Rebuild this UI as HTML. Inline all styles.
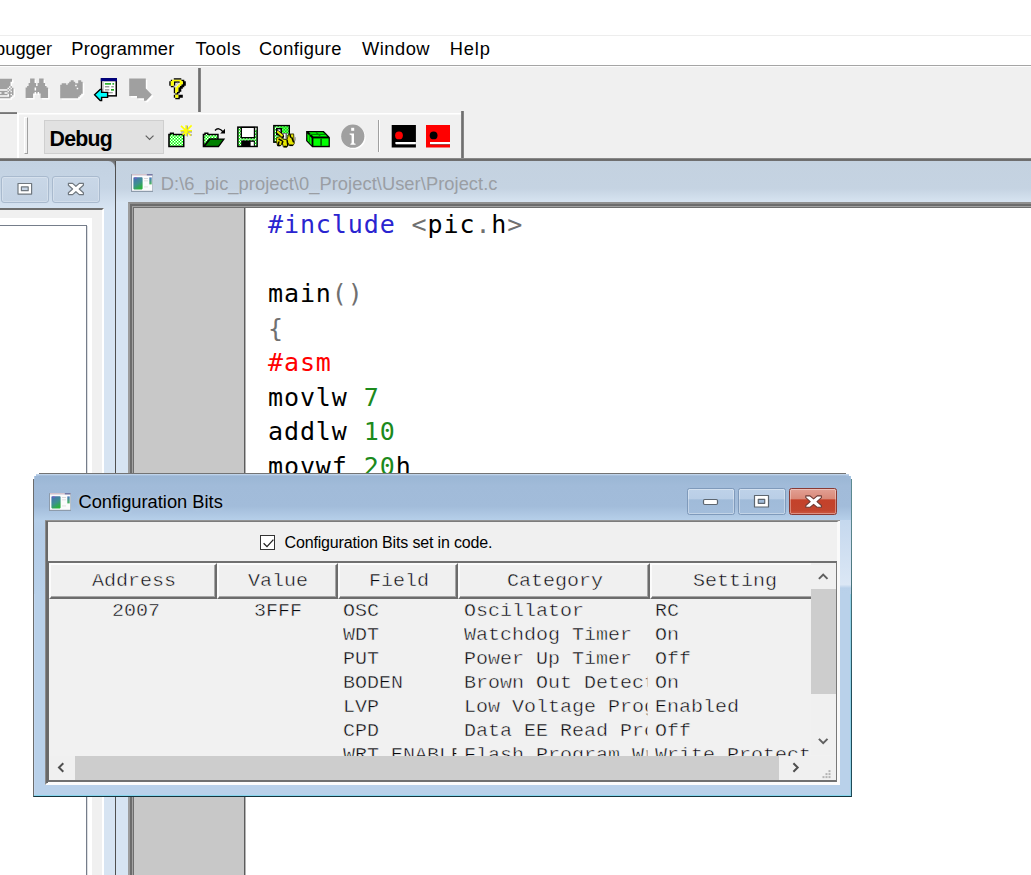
<!DOCTYPE html>
<html lang="en">
<head>
<meta charset="utf-8">
<title>MPLAB IDE - Configuration Bits</title>
<style>
html,body{margin:0;padding:0;}
body{width:1031px;height:875px;overflow:hidden;background:#fff;position:relative;font-family:"Liberation Sans",sans-serif;color:#000;}
.abs,#app div,#app svg{position:absolute;box-sizing:border-box;}
#app{position:absolute;left:0;top:0;width:1031px;height:875px;overflow:hidden;}
.t{white-space:pre;line-height:1;}
/* menu */
#menuline0{left:0;top:35px;width:1031px;height:1px;background:#ededed;}
.mi{top:38px;font-size:18.3px;line-height:21px;height:21px;white-space:pre;}
#menuline1{left:0;top:65px;width:1031px;height:1px;background:#a5a5a5;}
#tbarea{left:0;top:66px;width:1031px;height:92px;background:#f0f0f0;border-top:1px solid #fdfdfd;}
#sep1{left:198px;top:68px;width:3px;height:44px;background:linear-gradient(90deg,#8a8a8a,#6a6a6a 60%,#9a9a9a);}
#tb1bottom{left:0;top:112px;width:17px;height:2px;background:linear-gradient(#8c8c8c,#6e6e6e);}
#tb2{left:17px;top:113px;width:445px;height:45px;border-left:2px solid #fff;background:linear-gradient(#fff 0,#fff 1px,#f8f8f8 1px,#f8f8f8 2px,rgba(240,240,240,0) 2px);}
#tb2right{left:461px;top:111px;width:3px;height:47px;background:linear-gradient(90deg,#8a8a8a,#6a6a6a 60%,#9a9a9a);}
#grip{left:24px;top:117px;width:4px;height:37px;background:#f0f0f0;border-left:1px solid #fff;border-top:1px solid #fff;border-right:1px solid #a0a0a0;border-bottom:1px solid #a0a0a0;}
#combo{left:44px;top:120px;width:120px;height:34px;background:#e1e1e1;border:1px solid #cfcfcf;}
#combotext{left:49.5px;top:127px;font-weight:bold;font-size:21.3px;line-height:24px;height:24px;letter-spacing:-0.75px;}
#sep2{left:378px;top:120px;width:2px;height:32px;border-left:1px solid #a0a0a0;border-right:1px solid #fff;}
#darkline{left:0;top:158px;width:1031px;height:3px;background:linear-gradient(#9a9a9a,#6b6b6b 45%,#707070);}
/* left pane */
#lp{left:0;top:161px;width:115px;height:714px;background:#d7e4f2;}
#lpcorner{left:107px;top:0;width:8px;height:8px;background:linear-gradient(225deg,#6a6a6a 0,#8a8f96 35%,#c3d2e2 60%);}
#lptitle{left:0;top:0;width:115px;height:48px;background:linear-gradient(#c3d2e2 0%,#c6d5e5 55%,#d7e4f2 100%);border-top-right-radius:7px;}
.lpbtn{top:15px;width:48px;height:27px;border:1px solid #a9bace;border-radius:3px;background:linear-gradient(#c9d7e7,#c3d2e3);box-shadow:inset 0 0 0 1px rgba(255,255,255,.25);}
#lpclient{left:0;top:47px;width:104px;height:670px;background:#f0f0f0;border-top:2px solid #6f6f6f;border-right:2px solid #fff;}
#lpwhite{left:0;top:8px;width:92px;height:660px;background:#fff;}
#lptree{left:-2px;top:7px;width:89px;height:660px;border:1px solid #757d8a;background:#fff;box-shadow:1px 1px 0 rgba(120,128,140,.25);}
#vline{left:115px;top:161px;width:1px;height:714px;background:#505050;box-shadow:1px 0 0 rgba(90,90,90,.3);}
/* editor */
#ed{left:116px;top:161px;width:915px;height:714px;background:#d7e4f2;}
#edtitle{left:0;top:0;width:915px;height:42px;background:linear-gradient(#c4d2e0 0%,#c5d3e2 65%,#d8e5f2 100%);}
#edtitletext{left:44.8px;top:12px;font-size:18.3px;line-height:21px;color:#9a9ea4;white-space:pre;letter-spacing:0.06px;}
#edframe{left:12px;top:41px;width:910px;height:680px;border:2px solid;border-color:#8f8f8f #8f8f8f #8f8f8f #9c9c9c;background:#6c6c6c;}
#edframe2{left:2px;top:2px;width:910px;height:680px;border-left:1px solid #a2a2a2;border-top:1px solid #a2a2a2;background:#6e6e6e;}
#edframe3{left:1px;top:1px;width:910px;height:680px;background:#fff;}
#gutter{left:0;top:0;width:111px;height:680px;background:#c8c8c8;border-right:1px solid #5c5c5c;box-shadow:1px 0 0 #b4b4b4;}
#code{left:134px;top:-0.1px;font-family:"DejaVu Sans Mono","Liberation Mono",monospace;font-size:25px;letter-spacing:0.9px;line-height:34.6px;white-space:pre;color:#000;}
.kb{color:#2a24d0}.kr{color:#f00}.kg{color:#1c8a1c}.kp{color:#707070}
/* dialog */
#dlg{left:33px;top:473px;width:819px;height:324px;background:#b9d1ea;border:1px solid;border-color:#747474 #1f4a57 #16343d #6c6c6c;border-radius:0;box-shadow:inset 0 -1px 0 #86d6ee, inset -1px 0 0 #8fcfe6, inset 1px 0 0 #c3d7ee;overflow:hidden;}
#dlgtitlebg{left:0;top:0;width:817px;height:120px;background:linear-gradient(#cadcf0 0,#9bb6d5 2px,#a1bbd9 12px,#a2bcda 32px,#b6cfe9 46px,#b4cce7 60px,#b9d1ea 120px);}
#dlgrhl{left:806px;top:46px;width:11px;height:68px;background:linear-gradient(#c5d8ee,#dbe7f5 95%,#b9d1ea);}
#dlgtitle{left:44.5px;top:17px;font-size:18.3px;line-height:21px;white-space:pre;color:#000;text-shadow:0 0 5px rgba(255,255,255,.35);}
.cb{top:14px;height:27px;width:48px;border:1px solid #7f9abb;border-radius:2.5px;background:linear-gradient(#bed2e9 0,#b9cee6 40%,#a0bbd9 43%,#a3bddb 100%);box-shadow:inset 0 0 0 1px rgba(255,255,255,.35);}
#cbmin{left:653px}#cbmax{left:704px}#cbclose{left:755px;width:48px;border-color:#8a3a34;background:linear-gradient(#e2a094 0,#d98877 40%,#c4412a 43%,#c2452e 85%,#cc5a45 100%);}
.cbt{display:none}
#client{left:11px;top:46px;width:795px;height:265px;background:#f0f0f0;border-style:solid;border-width:2px 3px 3px 3px;border-color:#7c7c7c #fafafa #fcfcfc #8a8a8a;}
#client:before{content:"";position:absolute;left:-3px;top:-2px;width:795px;height:1px;background:#939393;}
#client:after{content:"";position:absolute;left:-2px;top:-1px;width:2px;height:262px;background:#686868;}
#cin{left:0;top:0;width:789px;height:260px;}
#chk{left:211.6px;top:12.6px;width:15px;height:15px;background:#fff;border:1px solid #333;}
#chklabel{left:236.5px;top:10.5px;font-size:16px;line-height:20px;letter-spacing:-0.15px;white-space:pre;color:#000;}
#tbl{left:0px;top:39px;width:789px;height:221px;border-style:solid;border-width:2px 1px 2px 1px;border-color:#707070 #787878 #707070 #6a6a6a;overflow:hidden;background:#f1f1f1;}
#tbl:before{content:"";position:absolute;left:0;top:-2px;width:789px;height:1px;background:#a6a6a6;}
.hc{top:0;height:36px;background:#f0f0f0;border-style:solid;border-width:2px 2px 2px 2px;border-color:#fbfbfb #6c6c6c #6c6c6c #fbfbfb;box-shadow:inset -1px -1px 0 #a6a6a6;}
.ht,.col{font-family:"Liberation Mono",monospace;font-size:18px;line-height:24px;white-space:pre;color:#08080c;-webkit-text-stroke:0.42px #f0f0f0;transform:scaleX(1.1111);transform-origin:0 0;}
.ht{top:5.5px;}
#rows{left:0;top:36px;width:762px;height:156.6px;overflow:hidden;}
.col{top:0px;overflow:hidden;height:170px;}
#vsb{left:762px;top:0;width:25px;height:192px;background:#f0f0f0;}
#vthumb{left:0;top:26px;width:25px;height:105px;background:#cdcdcd;}
#hsb{left:0;top:193px;width:762px;height:24px;background:#f0f0f0;}
#hthumb{left:26px;top:0;width:704px;height:24px;background:#cdcdcd;}
#sgrip{left:762px;top:193px;width:26px;height:24px;background:#f0f0f0;}
</style>
</head>
<body>
<div id="app">
<div id="menuline0"></div>
<div class="mi" style="left:-28.3px">Debugger</div>
<div class="mi" style="left:71.3px;letter-spacing:0.15px">Programmer</div>
<div class="mi" style="left:195.5px;letter-spacing:0.6px">Tools</div>
<div class="mi" style="left:259px;letter-spacing:0.4px">Configure</div>
<div class="mi" style="left:362px;letter-spacing:0.5px">Window</div>
<div class="mi" style="left:449.8px;letter-spacing:0.8px">Help</div>
<div id="menuline1"></div>
<div id="tbarea"></div>
<div id="sep1"></div>
<div id="tb1bottom"></div>
<div id="tb2"></div>
<div id="tb2right"></div>
<div id="grip"></div>
<div id="combo"></div>
<div id="combotext" class="t">Debug</div>
<div id="sep2"></div>
<!--ICONS-START--><svg id="tbicons" width="1031" height="161" viewBox="0 0 1031 161" style="left:0;top:0"><defs><pattern id="dg" width="3" height="3" patternUnits="userSpaceOnUse"><rect width="3" height="3" fill="#00ff00"/><rect x="0" y="0" width="1.5" height="1.5" fill="#fff"/><rect x="1.5" y="1.5" width="1.5" height="1.5" fill="#fff"/></pattern></defs><path d="M0.00 80.20h13.50v1.50h-13.50zM0.00 81.70h13.50v1.50h-13.50zM0.00 83.20h12.00v1.50h-12.00zM0.00 84.70h12.00v1.50h-12.00zM0.00 86.20h12.00v1.50h-12.00zM0.00 87.70h10.50v1.50h-10.50zM12.00 87.70h1.50v1.50h-1.50zM0.00 89.20h9.00v1.50h-9.00zM10.50 89.20h1.50v1.50h-1.50zM13.50 89.20h1.50v1.50h-1.50zM9.00 90.70h1.50v1.50h-1.50zM12.00 90.70h3.00v1.50h-3.00zM0.00 92.20h9.00v1.50h-9.00zM10.50 92.20h1.50v1.50h-1.50zM13.50 92.20h1.50v1.50h-1.50zM0.00 93.70h1.50v1.50h-1.50zM3.00 93.70h3.00v1.50h-3.00zM9.00 93.70h6.00v1.50h-6.00zM0.00 95.20h9.00v1.50h-9.00zM10.50 95.20h1.50v1.50h-1.50zM13.50 95.20h1.50v1.50h-1.50zM10.50 96.70h3.00v1.50h-3.00zM0.00 98.20h12.00v1.50h-12.00z" fill="#ffffff"/><path d="M-1.50 78.70h13.50v1.50h-13.50zM-1.50 80.20h13.50v1.50h-13.50zM-1.50 81.70h12.00v1.50h-12.00zM-1.50 83.20h12.00v1.50h-12.00zM-1.50 84.70h12.00v1.50h-12.00zM-1.50 86.20h10.50v1.50h-10.50zM10.50 86.20h1.50v1.50h-1.50zM-1.50 87.70h9.00v1.50h-9.00zM9.00 87.70h1.50v1.50h-1.50zM12.00 87.70h1.50v1.50h-1.50zM7.50 89.20h1.50v1.50h-1.50zM10.50 89.20h3.00v1.50h-3.00zM-1.50 90.70h9.00v1.50h-9.00zM9.00 90.70h1.50v1.50h-1.50zM12.00 90.70h1.50v1.50h-1.50zM-1.50 92.20h1.50v1.50h-1.50zM1.50 92.20h3.00v1.50h-3.00zM7.50 92.20h6.00v1.50h-6.00zM-1.50 93.70h9.00v1.50h-9.00zM9.00 93.70h1.50v1.50h-1.50zM12.00 93.70h1.50v1.50h-1.50zM9.00 95.20h3.00v1.50h-3.00zM-1.50 96.70h12.00v1.50h-12.00z" fill="#a0a0a0"/><path d="M31.60 79.90h4.50v1.50h-4.50zM40.60 79.90h4.50v1.50h-4.50zM31.60 81.40h4.50v1.50h-4.50zM40.60 81.40h4.50v1.50h-4.50zM31.60 82.90h4.50v1.50h-4.50zM40.60 82.90h4.50v1.50h-4.50zM30.10 84.40h7.50v1.50h-7.50zM39.10 84.40h7.50v1.50h-7.50zM30.10 85.90h7.50v1.50h-7.50zM39.10 85.90h7.50v1.50h-7.50zM28.60 87.40h19.50v1.50h-19.50zM27.10 88.90h9.00v1.50h-9.00zM37.60 88.90h12.00v1.50h-12.00zM27.10 90.40h9.00v1.50h-9.00zM37.60 90.40h12.00v1.50h-12.00zM27.10 91.90h22.50v1.50h-22.50zM27.10 93.40h9.00v1.50h-9.00zM37.60 93.40h1.50v1.50h-1.50zM40.60 93.40h9.00v1.50h-9.00zM27.10 94.90h7.50v1.50h-7.50zM42.10 94.90h7.50v1.50h-7.50zM27.10 96.40h7.50v1.50h-7.50zM42.10 96.40h7.50v1.50h-7.50zM27.10 97.90h7.50v1.50h-7.50zM42.10 97.90h7.50v1.50h-7.50z" fill="#ffffff"/><path d="M30.10 78.40h4.50v1.50h-4.50zM39.10 78.40h4.50v1.50h-4.50zM30.10 79.90h4.50v1.50h-4.50zM39.10 79.90h4.50v1.50h-4.50zM30.10 81.40h4.50v1.50h-4.50zM39.10 81.40h4.50v1.50h-4.50zM28.60 82.90h7.50v1.50h-7.50zM37.60 82.90h7.50v1.50h-7.50zM28.60 84.40h7.50v1.50h-7.50zM37.60 84.40h7.50v1.50h-7.50zM27.10 85.90h19.50v1.50h-19.50zM25.60 87.40h9.00v1.50h-9.00zM36.10 87.40h12.00v1.50h-12.00zM25.60 88.90h9.00v1.50h-9.00zM36.10 88.90h12.00v1.50h-12.00zM25.60 90.40h22.50v1.50h-22.50zM25.60 91.90h9.00v1.50h-9.00zM36.10 91.90h1.50v1.50h-1.50zM39.10 91.90h9.00v1.50h-9.00zM25.60 93.40h7.50v1.50h-7.50zM40.60 93.40h7.50v1.50h-7.50zM25.60 94.90h7.50v1.50h-7.50zM40.60 94.90h7.50v1.50h-7.50zM25.60 96.40h7.50v1.50h-7.50zM40.60 96.40h7.50v1.50h-7.50z" fill="#a0a0a0"/><path d="M72.20 81.70h3.00v1.50h-3.00zM79.70 81.70h3.00v1.50h-3.00zM70.70 83.20h6.00v1.50h-6.00zM79.70 83.20h4.50v1.50h-4.50zM63.20 84.70h4.50v1.50h-4.50zM69.20 84.70h15.00v1.50h-15.00zM61.70 86.20h15.00v1.50h-15.00zM78.20 86.20h6.00v1.50h-6.00zM61.70 87.70h22.50v1.50h-22.50zM61.70 89.20h16.50v1.50h-16.50zM79.70 89.20h4.50v1.50h-4.50zM61.70 90.70h22.50v1.50h-22.50zM61.70 92.20h22.50v1.50h-22.50zM61.70 93.70h22.50v1.50h-22.50zM61.70 95.20h21.00v1.50h-21.00zM61.70 96.70h19.50v1.50h-19.50zM61.70 98.20h18.00v1.50h-18.00z" fill="#ffffff"/><path d="M70.70 80.20h3.00v1.50h-3.00zM78.20 80.20h3.00v1.50h-3.00zM69.20 81.70h6.00v1.50h-6.00zM78.20 81.70h4.50v1.50h-4.50zM61.70 83.20h4.50v1.50h-4.50zM67.70 83.20h15.00v1.50h-15.00zM60.20 84.70h15.00v1.50h-15.00zM76.70 84.70h6.00v1.50h-6.00zM60.20 86.20h22.50v1.50h-22.50zM60.20 87.70h16.50v1.50h-16.50zM78.20 87.70h4.50v1.50h-4.50zM60.20 89.20h22.50v1.50h-22.50zM60.20 90.70h22.50v1.50h-22.50zM60.20 92.20h22.50v1.50h-22.50zM60.20 93.70h21.00v1.50h-21.00zM60.20 95.20h19.50v1.50h-19.50zM60.20 96.70h18.00v1.50h-18.00z" fill="#a0a0a0"/><rect x="100.8" y="78.1" width="16.2" height="18.5" fill="#000"/><rect x="100.8" y="78.1" width="16.2" height="3.2" fill="#000080"/><rect x="102.3" y="81.3" width="13.2" height="13.8" fill="#fff"/><rect x="102.3" y="81.3" width="1.6" height="13.8" fill="#c8c8c8"/><rect x="104.9" y="83.2" width="6.1" height="1.4" fill="#00a000"/><rect x="112.4" y="83.2" width="1.7" height="1.4" fill="#00a000"/><rect x="104.9" y="86.1" width="4.4" height="1.3" fill="#909090"/><rect x="111.3" y="86.1" width="2.5" height="1.3" fill="#909090"/><rect x="104.9" y="89.2" width="4.4" height="1.3" fill="#909090"/><rect x="111" y="89.1" width="3" height="1.5" fill="#00a000"/><rect x="108" y="92" width="4.8" height="1.3" fill="#a0a0a0"/><path d="M94.6 94.8 L100.2 89.4 L101.6 89.4 L101.6 92.4 L107.6 92.4 L107.6 97.4 L101.6 97.4 L101.6 100.6 L100.2 100.6 Z" fill="#00ffff" stroke="#000" stroke-width="1.4" stroke-linejoin="miter"/><path d="M130.7 80.0 H147.3 V90.1 L153.4 96.2 L147.7 102.3 H145.5 V99.7 H138.5 V97.5 H130.7 z" fill="#fff"/><path d="M129.2 78.5 H145.8 V88.6 L151.9 94.7 L146.2 100.8 H144.0 V98.2 H137.0 V96.0 H129.2 z" fill="#a0a0a0"/><path d="M173.80 78.20h7.50v1.50h-7.50zM170.80 79.70h1.50v1.50h-1.50zM181.30 79.70h3.00v1.50h-3.00zM169.30 81.20h1.50v1.50h-1.50zM173.80 81.20h6.00v1.50h-6.00zM182.80 81.20h3.00v1.50h-3.00zM169.30 82.70h1.50v1.50h-1.50zM173.80 82.70h1.50v1.50h-1.50zM182.80 82.70h3.00v1.50h-3.00zM169.30 84.20h1.50v1.50h-1.50zM173.80 84.20h1.50v1.50h-1.50zM181.30 84.20h4.50v1.50h-4.50zM170.80 85.70h3.00v1.50h-3.00zM179.80 85.70h4.50v1.50h-4.50zM173.80 87.20h1.50v1.50h-1.50zM178.30 87.20h4.50v1.50h-4.50zM173.80 88.70h1.50v1.50h-1.50zM178.30 88.70h3.00v1.50h-3.00zM173.80 90.20h1.50v1.50h-1.50zM178.30 90.20h3.00v1.50h-3.00zM173.80 91.70h1.50v1.50h-1.50zM176.80 91.70h3.00v1.50h-3.00zM175.30 93.20h3.00v1.50h-3.00zM173.80 94.70h1.50v1.50h-1.50zM178.30 94.70h4.50v1.50h-4.50zM173.80 96.20h1.50v1.50h-1.50zM178.30 96.20h4.50v1.50h-4.50zM175.30 97.70h4.50v1.50h-4.50z" fill="#000000"/><path d="M172.30 79.70h9.00v1.50h-9.00zM170.80 81.20h3.00v1.50h-3.00zM179.80 81.20h3.00v1.50h-3.00zM170.80 82.70h3.00v1.50h-3.00zM179.80 82.70h3.00v1.50h-3.00zM170.80 84.20h3.00v1.50h-3.00zM178.30 84.20h3.00v1.50h-3.00zM176.80 85.70h3.00v1.50h-3.00zM175.30 87.20h3.00v1.50h-3.00zM175.30 88.70h3.00v1.50h-3.00zM175.30 90.20h3.00v1.50h-3.00zM175.30 91.70h1.50v1.50h-1.50zM175.30 94.70h3.00v1.50h-3.00zM175.30 96.20h3.00v1.50h-3.00z" fill="#ffff00"/><path d="M176.80 82.70h1.50v1.50h-1.50zM175.30 84.20h1.50v1.50h-1.50zM173.80 85.70h1.50v1.50h-1.50z" fill="#c0c0c0"/><path d="M168.2 147.2 V133.8 h1.6 v-1.3 h4.2 v1.3 h10.5 V147.2 z" fill="#000"/><path d="M169.8 145.7 V135.3 h1.5 v-1.3 h1.5 v1.3 h10.2 V145.7 z" fill="url(#dg)"/><g stroke="#ffff00" stroke-width="1.6"><path d="M186.1 125.2 V136 M180.4 130.9 H192 M181 125.9 L191 135.6 M191.6 125.4 L182.6 134.6"/></g><g stroke="#909090" stroke-width="1"><path d="M187.3 125.6 V136.6 M181 132 H192"/></g><rect x="184.2" y="128.8" width="3.6" height="4.4" fill="#ffff00"/><rect x="190.6" y="134.4" width="1.2" height="1.2" fill="#808080"/><path d="M202.7 147.2 V133.8 h1.6 v-1.3 h4.2 v1.3 h10.2 v4.6 h6.5 L218.8 147.2 z" fill="#000"/><path d="M204.3 144.6 V135.3 h1.4 v-1.3 h1.6 v1.3 h9.9 v3 h-8 z" fill="url(#dg)"/><path d="M205.6 145.8 L210.4 139.8 H222.8 L218.2 145.8 z" fill="#008000"/><path d="M215 130.4 q3.6 -3.8 8 1.4" fill="none" stroke="#000" stroke-width="1.4"/><path d="M225 128.8 v4.8 h-4.8 z" fill="#000"/><rect x="237.1" y="126.4" width="20.8" height="20.8" fill="#000"/><rect x="238.6" y="127.9" width="17.8" height="17.8" fill="url(#dg)"/><rect x="240.6" y="126.8" width="14.6" height="11.6" fill="#000"/><rect x="242" y="128" width="11.8" height="9" fill="#fff"/><rect x="255" y="127.8" width="1.6" height="2" fill="#c0c0c0"/><rect x="241.2" y="140.4" width="13.6" height="6.2" fill="#000"/><rect x="250.6" y="141.8" width="3.2" height="4" fill="#fff"/><rect x="273.1" y="124.9" width="16.9" height="18" fill="#000"/><rect x="274.6" y="126.4" width="13.9" height="15" fill="url(#dg)"/><rect x="279.5" y="126.4" width="8.8" height="7" fill="#00e000" opacity=".55"/><rect x="276" y="128" width="6" height="7.4" fill="#000"/><rect x="277.6" y="129.4" width="2.8" height="3" fill="#fff"/><rect x="282" y="133" width="5.2" height="6.4" fill="#707070"/><rect x="283.8" y="133.8" width="1.7" height="5" fill="#fff"/><path d="M277.9 132.1 L282.3 136.2" stroke="#000" stroke-width="3.6" stroke-linecap="round"/><path d="M277.9 131.9 L281.9 135.6" stroke="#f0f000" stroke-width="2" stroke-linecap="round"/><path d="M276.8 137.6 L280.1 136.5 L282.6 139 L287 139.8 L288.5 134.3 L293.6 133.9 L294.3 143.4 L292.9 145.6 L289.6 145.6 L288.5 143.4 L287 147.1 L283.4 147.1 L282.6 143.8 L280.4 145.6 L277.5 145.6 L276.4 140.5 z" fill="#e6e600" stroke="#3a3a00" stroke-width="1" stroke-linejoin="round"/><g stroke="#000" stroke-width="1.5" fill="none" stroke-linecap="round"><path d="M279 139.2 L281.9 140.6"/><path d="M278.9 142 L278 145.4"/><path d="M282.8 141.6 L282 143.8"/><path d="M287.2 140.6 L287.8 145.4"/><path d="M291.9 137.8 L293.4 141.8"/><path d="M290 134.6 L290.6 137"/><path d="M284.5 146.6 H286.4"/><path d="M290 145.3 H292.4"/><path d="M278.4 145.4 H280"/></g><rect x="294.4" y="137.2" width="1.5" height="3.4" fill="#a8a8a8"/><path d="M306.1 130.9 H323.8 L329.9 137.3 V147.2 H312.2 L306.1 141 z" fill="#000"/><path d="M308.8 132.2 H323 L327.4 136.6 H313.4 z" fill="#00ff00"/><path d="M307.4 133.4 L311.6 138 V145.2 L307.4 140.6 z" fill="#00ff00"/><rect x="313.4" y="138.4" width="15.2" height="7.4" fill="#00ff00"/><path d="M316 132.2 L320.8 136.6 M309.6 134.4 H325" stroke="#008000" stroke-width="1.2" fill="none"/><rect x="320.2" y="138.4" width="1.8" height="7.4" fill="#007000"/><path d="M309.4 135.4 V142.6" stroke="#00a000" stroke-width="1"/><circle cx="354" cy="137.5" r="11.6" fill="#fff"/><circle cx="352.8" cy="136.2" r="11.6" fill="#a0a0a0"/><rect x="351.2" y="127.8" width="3" height="3" fill="#fff"/><path d="M349.6 133.4 h4.4 v9 q0 1.2 1.6 1.4 v1 h-5.2 v-1 q1.2 -0.2 1.2 -1.4 v-6.6 q0 -1.2 -2 -1.4 z" fill="#fff"/><rect x="391.7" y="125" width="24.2" height="22.5" fill="#000"/><circle cx="399" cy="135.4" r="3.9" fill="#ff0000"/><rect x="395.4" y="142" width="20.5" height="2.1" fill="#fff"/><rect x="396" y="144.1" width="19.9" height="0.8" fill="#606060"/><rect x="426" y="125" width="24" height="22.5" fill="#ff0000"/><circle cx="433.6" cy="135.4" r="3.9" fill="#000"/><rect x="430" y="142" width="20" height="2.1" fill="#fff"/><rect x="430.6" y="144.1" width="19.4" height="0.8" fill="#905050"/><path d="M145.7 135.6 L149.6 139.4 L153.5 135.6" fill="none" stroke="#606060" stroke-width="1.2"/></svg><!--ICONS-END-->
<div id="darkline"></div>

<div id="lp">
  <div id="lpcorner"></div><div id="lptitle"></div>
  <div class="lpbtn" style="left:1px"><svg width="48" height="27" viewBox="0 0 48 27" style="left:-1px;top:-1px"><path d="M17 7.5h13.6v10.6h-13.6z M20.4 10.9v3.8h6.8v-3.8z" fill="#fff" fill-rule="evenodd" stroke="#70787f" stroke-width="1.2" stroke-linejoin="round"/></svg></div>
  <div class="lpbtn" style="left:52px"><svg width="48" height="27" viewBox="0 0 48 27" style="left:-1px;top:-1px"><path d="M16.4 7.4 L20.6 7.4 L23.9 10.3 L27.2 7.4 L31.4 7.4 L31.4 9.2 L27.2 13 L31.4 16.8 L31.4 18.6 L27.2 18.6 L23.9 15.7 L20.6 18.6 L16.4 18.6 L16.4 16.8 L20.6 13 L16.4 9.2 Z" fill="#fff" stroke="#70787f" stroke-width="1.2" stroke-linejoin="round"/></svg></div>
  <div id="lpclient"><div id="lpwhite"><div id="lptree"></div></div></div>
</div>
<div id="vline"></div>

<div id="ed">
  <div id="edtitle"></div>
  <svg class="wicon" width="24" height="20" viewBox="0 0 24 20" style="left:14.1px;top:12.2px"><defs><linearGradient id="wg1" x1="0" y1="0" x2="0.5" y2="1"><stop offset="0" stop-color="#4a6cb8"/><stop offset="0.6" stop-color="#3e9090"/><stop offset="1" stop-color="#2cb040"/></linearGradient><linearGradient id="wh1" x1="0" y1="0" x2="0" y2="1"><stop offset="0" stop-color="#4a78c0"/><stop offset="1" stop-color="#4cb85c"/></linearGradient></defs><rect x="1" y="1" width="22" height="18" rx="0.6" fill="#8d9bab"/><rect x="2" y="2.2" width="20.4" height="15.6" fill="#fbfbfc"/><rect x="2" y="1.1" width="20.4" height="1.2" fill="#dcc8d0"/><rect x="16.8" y="1.1" width="5.6" height="1.3" fill="#6a70a0"/><rect x="3.4" y="4.2" width="9.2" height="12.2" rx="0.8" fill="url(#wg1)"/><rect x="5" y="4.2" width="1.6" height="1.4" fill="#9a50d0" opacity=".7"/><rect x="14" y="5" width="4" height="0.9" fill="#d4d4d4"/><rect x="14" y="7.4" width="4" height="0.9" fill="#dcdcdc"/><rect x="14" y="13.4" width="4" height="1" fill="#e2e2e2"/><rect x="19.3" y="4.4" width="2.4" height="7" fill="url(#wh1)"/></svg>
  <div id="edtitletext">D:\6_pic_project\0_Project\User\Project.c</div>
  <div id="edframe"><div id="edframe2"><div id="edframe3">
    <div id="gutter"></div>
<div id="code"><span class="kb">#include</span> <span class="kp">&lt;</span>pic<span class="kp">.</span>h<span class="kp">&gt;</span>

main<span class="kp">()</span>
<span class="kp">{</span>
<span class="kr">#asm</span>
movlw <span class="kg">7</span>
addlw <span class="kg">10</span>
movwf <span class="kg">20</span>h</div>
  </div></div></div>
</div>
<div id="dlg">
  <div id="dlgtitlebg"></div>
  <div id="dlgrhl"></div>
  <svg class="wicon" width="24" height="20" viewBox="0 0 24 20" style="left:13.6px;top:17.6px"><defs><linearGradient id="wg2" x1="0" y1="0" x2="0.5" y2="1"><stop offset="0" stop-color="#4a6cb8"/><stop offset="0.6" stop-color="#3e9090"/><stop offset="1" stop-color="#2cb040"/></linearGradient><linearGradient id="wh2" x1="0" y1="0" x2="0" y2="1"><stop offset="0" stop-color="#4a78c0"/><stop offset="1" stop-color="#4cb85c"/></linearGradient></defs><rect x="1" y="1" width="22" height="18" rx="0.6" fill="#8d9bab"/><rect x="2" y="2.2" width="20.4" height="15.6" fill="#fbfbfc"/><rect x="2" y="1.1" width="20.4" height="1.2" fill="#dcc8d0"/><rect x="16.8" y="1.1" width="5.6" height="1.3" fill="#6a70a0"/><rect x="3.4" y="4.2" width="9.2" height="12.2" rx="0.8" fill="url(#wg2)"/><rect x="5" y="4.2" width="1.6" height="1.4" fill="#9a50d0" opacity=".7"/><rect x="14" y="5" width="4" height="0.9" fill="#d4d4d4"/><rect x="14" y="7.4" width="4" height="0.9" fill="#dcdcdc"/><rect x="14" y="13.4" width="4" height="1" fill="#e2e2e2"/><rect x="19.3" y="4.4" width="2.4" height="7" fill="url(#wh2)"/></svg>
  <div id="dlgtitle">Configuration Bits</div>
  <div class="cb" id="cbmin"><div class="cbt"></div><svg width="47" height="25" viewBox="0 0 47 25" style="left:-1px;top:0px"><rect x="16.5" y="10.5" width="14" height="5" rx="1.2" fill="#fff" stroke="#5d6670" stroke-width="1.2"/></svg></div>
  <div class="cb" id="cbmax"><div class="cbt"></div><svg width="47" height="25" viewBox="0 0 47 25" style="left:-1px;top:0px"><path d="M16.5 6.5h14v11.5h-14z M20.3 10.3v4h6.4v-4z" fill="#fff" fill-rule="evenodd" stroke="#5d6670" stroke-width="1.2" stroke-linejoin="round"/></svg></div>
  <div class="cb" id="cbclose"><div class="cbt"></div><svg width="48" height="25" viewBox="0 0 48 25" style="left:-1px;top:0px"><path d="M16.8 6.9 L21 6.9 L24.6 9.9 L28.2 6.9 L32.4 6.9 L32.4 8.7 L28 12.6 L32.4 16.5 L32.4 18.3 L28.2 18.3 L24.6 15.3 L21 18.3 L16.8 18.3 L16.8 16.5 L21.2 12.6 L16.8 8.7 Z" fill="#fff" stroke="#6e3a34" stroke-width="1.1" stroke-linejoin="round"/></svg></div>
  <div id="client">
    <div id="cin">
      <div id="chk"><svg width="15" height="15" viewBox="0 0 15 15" style="left:0;top:0"><path d="M2.6 7.2 L6 10.6 L12.4 3.6" fill="none" stroke="#222" stroke-width="1.3"/></svg></div>
      <div id="chklabel">Configuration Bits set in code.</div>
      <div id="tbl">
        <div class="hc" style="left:0;width:168px"></div>
        <div class="hc" style="left:168px;width:121px"></div>
        <div class="hc" style="left:289px;width:120px"></div>
        <div class="hc" style="left:409px;width:192px"></div>
        <div class="hc" style="left:601px;width:170px"></div>
        <div class="ht" style="left:43.4px">Address</div>
        <div class="ht" style="left:199.4px">Value</div>
        <div class="ht" style="left:320px">Field</div>
        <div class="ht" style="left:457.5px">Category</div>
        <div class="ht" style="left:643.5px">Setting</div>
        <div id="rows">
          <div class="col" style="left:63.4px;width:90px">2007</div>
          <div class="col" style="left:205px;width:70px">3FFF</div>
          <div class="col" style="left:293.7px;width:102px">OSC
WDT
PUT
BODEN
LVP
CPD
WRT_ENABLE</div>
          <div class="col" style="left:414.6px;width:164.9px">Oscillator
Watchdog Timer
Power Up Timer
Brown Out Detect
Low Voltage Program
Data EE Read Protect
Flash Program Write</div>
          <div class="col" style="left:606.3px;width:140.8px">RC
On
Off
On
Enabled
Off
Write Protection Off</div>
        </div>
        <div id="vsb"><div id="vthumb"></div>
          <svg width="25" height="26" viewBox="0 0 25 26" style="left:0;top:0"><path d="M7.9 15.9 L12.2 11.6 L16.5 15.9" fill="none" stroke="#5f5f5f" stroke-width="2"/></svg>
          <svg width="25" height="26" viewBox="0 0 25 26" style="left:0;top:167px"><path d="M7.9 8.9 L12.2 13.2 L16.5 8.9" fill="none" stroke="#5f5f5f" stroke-width="2"/></svg>
        </div>
        <div id="hsb"><div id="hthumb"></div>
          <svg width="26" height="25" viewBox="0 0 26 25" style="left:0;top:-1px"><path d="M14.3 8.2 L10 12.5 L14.3 16.8" fill="none" stroke="#4f4f4f" stroke-width="2"/></svg>
          <svg width="26" height="25" viewBox="0 0 26 25" style="left:733px;top:-1px"><path d="M11.4 8.2 L15.7 12.5 L11.4 16.8" fill="none" stroke="#4f4f4f" stroke-width="2"/></svg>
        </div>
        <div id="sgrip"><svg width="26" height="25" viewBox="0 0 26 25" style="left:0;top:-1px"><g fill="#b4b4b4" transform="translate(-1,3.6)"><rect x="18.5" y="11.5" width="2" height="2"/><rect x="15.5" y="14.5" width="2" height="2"/><rect x="18.5" y="14.5" width="2" height="2"/><rect x="12.5" y="17.5" width="2" height="2"/><rect x="15.5" y="17.5" width="2" height="2"/><rect x="18.5" y="17.5" width="2" height="2"/></g></svg></div>
      </div>
    </div>
  </div>
</div>

<div class="cp" style="left:33px;top:473px;width:6px;height:6px;background:#fff"></div>
<div class="cp" style="left:36px;top:474px;width:3px;height:2px;background:linear-gradient(#c6d9ee,#a3bddb)"></div>
<div class="cp" style="left:34px;top:476px;width:5px;height:3px;background:linear-gradient(90deg,#bdd2ea 0,#9db8d7 1.5px)"></div>
<div class="cp" style="left:846px;top:473px;width:6px;height:6px;background:#fff"></div>
<div class="cp" style="left:846px;top:474px;width:3px;height:2px;background:linear-gradient(#c6d9ee,#a3bddb)"></div>
<div class="cp" style="left:846px;top:476px;width:5px;height:3px;background:linear-gradient(270deg,#a9cbe6 0,#9db8d7 1.5px)"></div>
<div class="cp" style="left:851px;top:479px;width:1px;height:220px;background:linear-gradient(#5d8b92 0,#568188 30%,#1f4a57 100%)"></div>
</div>
</body>
</html>
